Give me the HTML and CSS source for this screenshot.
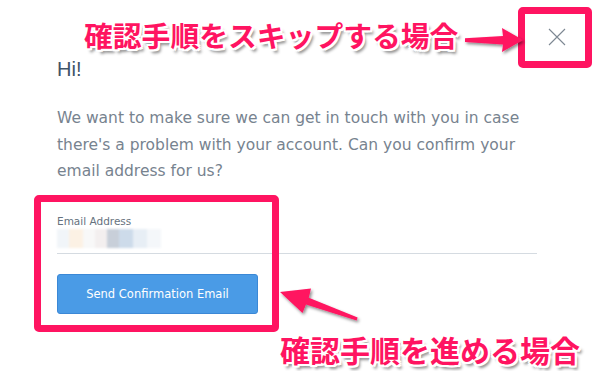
FILE: index.html
```html
<!DOCTYPE html>
<html lang="ja">
<head>
<meta charset="utf-8">
<title>Confirm email</title>
<link rel="stylesheet" href="styles.css">
</head>
<body>
<div class="modal">
  <button class="close" aria-label="Close">
    <svg width="18" height="18" viewBox="0 0 18 18"><path d="M1 1 L17 17 M17 1 L1 17" stroke="#7d8893" stroke-width="1.1" fill="none"/></svg>
  </button>
  <div class="content">
    <h1 class="hi">Hi!</h1>
    <p class="msg">We want to make sure we can get in touch with you in case there's a problem with your account. Can you confirm your email address for us?</p>
    <form class="form">
      <label class="label">Email Address</label>
      <div class="field">
        <div class="blur">
          <span class="b1"></span><span class="b2"></span><span class="b3"></span><span class="b4"></span><span class="b5"></span><span class="b6"></span><span class="b7"></span><span class="b8"></span>
        </div>
      </div>
      <button type="button" class="send">Send Confirmation Email</button>
    </form>
  </div>

  <div class="note note-top">確認手順をスキップする場合</div>
  <div class="note note-bottom">確認手順を進める場合</div>
  <div class="hl hl-close"></div>
  <div class="hl hl-form"></div>
  <svg class="arrows" width="593" height="371" viewBox="0 0 593 371">
    <defs>
      <filter id="sh" x="-20%" y="-20%" width="140%" height="140%">
        <feDropShadow dx="1.5" dy="2" stdDeviation="1.5" flood-color="#000" flood-opacity="0.45"/>
      </filter>
    </defs>
    <polygon filter="url(#sh)" fill="#ff1461" points="465,38.3 503,36 502,28 523,40 502,52 503,44.5 465,42"/>
    <polygon filter="url(#sh)" fill="#ff1461" points="357.6,317.4 308.8,297.8 311,288.5 280,292 302.5,313 306,304.5 356.6,320.6"/>
  </svg>
</div>
</body>
</html>
```

FILE: styles.css
```css
* { box-sizing: border-box; }
html, body { margin: 0; padding: 0; background: #fff; }
.modal {
  position: relative;
  width: 593px;
  height: 371px;
  overflow: hidden;
  background: #fff;
  font-family: "DejaVu Sans", "Liberation Sans", sans-serif;
}
.close {
  position: absolute;
  left: 548px;
  top: 28px;
  width: 18px;
  height: 18px;
  padding: 0;
  border: 0;
  background: transparent;
  display: flex;
}
.content {
  padding: 57px 56px 0 57px;
}
.hi {
  margin: 0;
  font-size: 20px;
  line-height: 24px;
  font-weight: 400;
  color: #3f5468;
  font-family: "Liberation Sans", sans-serif;
}
.msg {
  margin: 24px 0 0;
  font-size: 15.5px;
  line-height: 26.5px;
  color: #77838f;
  width: 476px;
}
.form {
  margin: 29px 0 0;
  display: flex;
  flex-direction: column;
  align-items: flex-start;
}
.label {
  font-size: 10.5px;
  line-height: 14px;
  color: #66727e;
}
.field {
  width: 480px;
  padding: 1px 0 5px;
  border-bottom: 1px solid #d5dbe1;
}
.blur {
  display: flex;
  height: 19px;
  filter: blur(1.2px);
}
.blur span { display: block; height: 19px; }
.b1 { width: 12px; background: #f1f5f9; }
.b2 { width: 14px; background: #fcf1e4; }
.b3 { width: 12px; background: #f8f8f8; }
.b4 { width: 12px; background: #f3efef; }
.b5 { width: 12px; background: #c8cfd9; }
.b6 { width: 14px; background: #cddbea; }
.b7 { width: 14px; background: #e7eef5; }
.b8 { width: 14px; background: #f4f7fa; }
.send {
  margin-top: 20px;
  width: 201px;
  height: 40px;
  border: 1px solid #3b88d6;
  border-radius: 3px;
  background: #4a9be6;
  color: #fff;
  font-family: "DejaVu Sans", "Liberation Sans", sans-serif;
  font-size: 11.5px;
  padding: 0;
}
.note {
  position: absolute;
  font-family: "Noto Sans CJK JP", sans-serif;
  font-weight: 700;
  color: #ff1461;
  white-space: nowrap;
  line-height: 1;
  text-shadow:
    -2px -2px 0 #fff, 2px -2px 0 #fff, -2px 2px 0 #fff, 2px 2px 0 #fff,
    0 -2px 0 #fff, 0 2px 0 #fff, -2px 0 0 #fff, 2px 0 0 #fff,
    3px 4px 3px rgba(0,0,0,0.45);
}
.note-top {
  left: 84px;
  top: 21px;
  font-size: 28.8px;
}
.note-bottom {
  left: 280px;
  top: 334px;
  font-size: 30px;
}
.hl {
  position: absolute;
  border: 7px solid #ff1461;
  border-radius: 5px;
}
.hl-close {
  left: 518px;
  top: 7px;
  width: 74px;
  height: 61px;
}
.hl-form {
  left: 34px;
  top: 195px;
  width: 245px;
  height: 137px;
}
.arrows {
  position: absolute;
  left: 0;
  top: 0;
  pointer-events: none;
}
```
